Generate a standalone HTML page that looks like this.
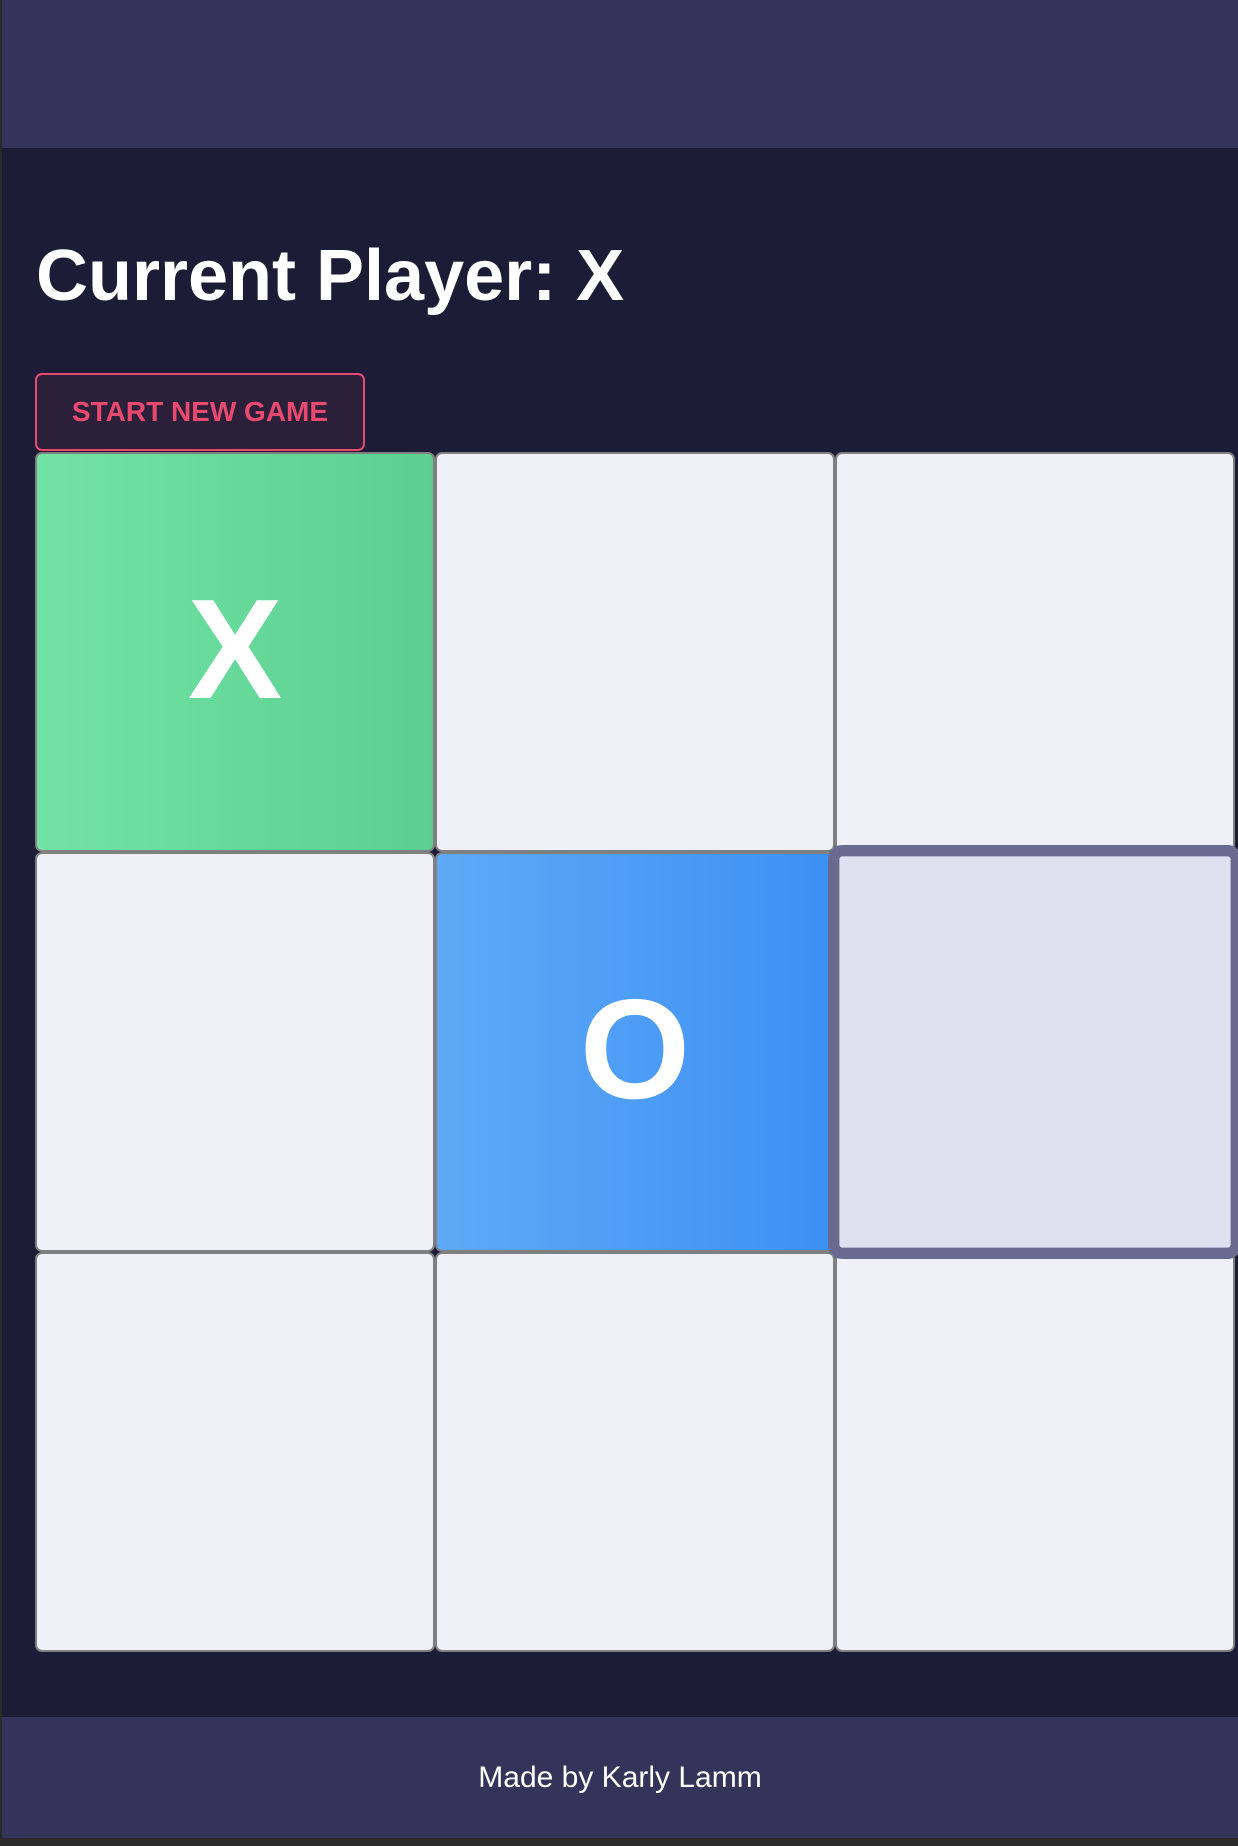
<!DOCTYPE html>
<html><head><meta charset="utf-8"><style>
*{margin:0;padding:0;box-sizing:border-box}
html,body{width:1238px;height:1846px;overflow:hidden;background:#2a2a2a;font-family:"Liberation Sans",Arial,sans-serif}
.wrap{position:absolute;left:2px;top:0;width:1236px;height:1838px;background:#1c1c36}
.hdr{position:absolute;left:0;top:0;width:1236px;height:148px;background:#34335a}
h1{position:absolute;left:34px;top:231px;font-size:72px;font-weight:bold;color:#fff;line-height:90px;white-space:nowrap}
.btn{position:absolute;left:33px;top:373px;width:330px;height:78px;border:2px solid #e84a6f;border-radius:7px;background:#2c1f3a;color:#e84a6f;font-weight:bold;font-size:28px;text-align:center;line-height:74px}
.board{position:absolute;left:33px;top:452px;width:1200px;height:1200px}
.c{position:absolute;width:400px;height:400px;border:2px solid #808080;border-radius:7px;background:#efeff8;color:#fff;font-weight:bold;font-size:142px;text-align:center;line-height:392px}
.x{background:linear-gradient(90deg,#72e3a2,#5bcf92)}
.o{background:linear-gradient(90deg,#5eaaf6,#3d90f4)}
.h{background:#e1e0f0;border:11px solid #6a6a90;border-radius:14px;transform:scale(1.035);z-index:2}
.ftr{position:absolute;left:0;top:1717px;width:1236px;height:121px;background:#34335a;color:#fff;font-size:30px;text-align:center;line-height:121px}
</style></head><body>
<div class="wrap">
<div class="hdr"></div>
<h1>Current Player: X</h1>
<div class="btn">START NEW GAME</div>
<div class="board">
<div class="c x" style="left:0;top:0">X</div>
<div class="c" style="left:400px;top:0"></div>
<div class="c" style="left:800px;top:0"></div>
<div class="c" style="left:0;top:400px"></div>
<div class="c o" style="left:400px;top:400px">O</div>
<div class="c h" style="left:800px;top:400px"></div>
<div class="c" style="left:0;top:800px"></div>
<div class="c" style="left:400px;top:800px"></div>
<div class="c" style="left:800px;top:800px"></div>
</div>
<div class="ftr">Made by Karly Lamm</div>
</div>
</body></html>
